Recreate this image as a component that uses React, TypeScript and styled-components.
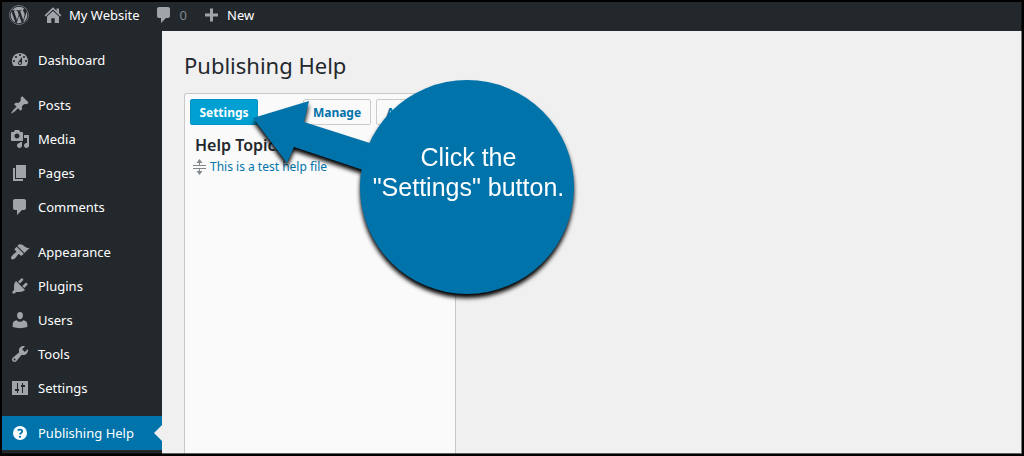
import React from "react";
import styled, { createGlobalStyle, css } from "styled-components";
import { FaWordpress } from "react-icons/fa";

const GlobalStyle = createGlobalStyle`
  *, *::before, *::after { box-sizing: border-box; }
  body {
    margin: 0;
    background: #f0f0f0;
    color: #23282d;
    font: 13px/18px "Noto Sans", "Open Sans", sans-serif;
  }
  h1, h2, ul { margin: 0; padding: 0; }
  ul { list-style: none; }
  a { color: inherit; text-decoration: none; }
  button { font: inherit; cursor: pointer; }
`;

const icons = {
  home: "M10 2.2L1.6 10.3l1.2 1.2L10 4.6l7.2 6.9 1.2-1.2L16 8V3.4h-2.4v2.3zM10 5.9L4 11.6V18h4.3v-4.8h3.4V18H16v-6.4z",
  comment: "M5 2h9c1.1 0 2 .9 2 2v7c0 1.1-.9 2-2 2h-2l-5 5v-5H5c-1.1 0-2-.9-2-2V4c0-1.1.9-2 2-2z",
  plus: "M17 8.5v3h-5v5H9v-5H4v-3h5v-5h3v5h5z",
  dashboard:
    "M3.76 16h12.48c1.1-1.37 1.76-3.11 1.76-5 0-4.42-3.58-8-8-8s-8 3.58-8 8c0 1.89.66 3.63 1.76 5zM10 4c.55 0 1 .45 1 1s-.45 1-1 1-1-.45-1-1 .45-1 1-1zM6 6c.55 0 1 .45 1 1s-.45 1-1 1-1-.45-1-1 .45-1 1-1zm8 0c.55 0 1 .45 1 1s-.45 1-1 1-1-.45-1-1 .45-1 1-1zm-5.37 5.55L12 7v6c0 1.1-.9 2-2 2s-2-.9-2-2c0-.57.24-1.08.63-1.45zM4 10c.55 0 1 .45 1 1s-.45 1-1 1-1-.45-1-1 .45-1 1-1zm12 0c.55 0 1 .45 1 1s-.45 1-1 1-1-.45-1-1 .45-1 1-1zm-5 3c0-.55-.45-1-1-1s-1 .45-1 1 .45 1 1 1 1-.45 1-1z",
  post: "M10.44 3.02l1.82-1.82 6.36 6.35-1.83 1.82c-1.05-.68-2.48-.57-3.41.36l-.75.75c-.92.93-1.04 2.35-.35 3.41l-1.83 1.82-2.41-2.41-2.8 2.79c-.42.42-3.38 2.71-3.8 2.29s1.86-3.39 2.28-3.81l2.79-2.79L4.1 9.36l1.83-1.82c1.05.69 2.48.57 3.4-.36l.75-.75c.93-.92 1.05-2.35.36-3.41z",
  media:
    "M13 11V4c0-.55-.45-1-1-1h-1.67L9 1H5L3.67 3H2c-.55 0-1 .45-1 1v7c0 .55.45 1 1 1h10c.55 0 1-.45 1-1zM7 4.5c1.38 0 2.5 1.12 2.5 2.5S8.38 9.5 7 9.5 4.5 8.38 4.5 7 5.62 4.5 7 4.5zM14 6h5v10.5c0 1.38-1.12 2.5-2.5 2.5S14 17.88 14 16.5s1.12-2.5 2.5-2.5c.17 0 .34.02.5.05V9h-3V6zm-4 8.05V13h2v3.5c0 1.38-1.12 2.5-2.5 2.5S7 17.88 7 16.5 8.12 14 9.5 14c.17 0 .34.02.5.05z",
  page: "M6 15V2h10v13H6zm-1 1h8v2H3V5h2v11z",
  appearance:
    "M14.48 11.06L7.41 3.99l1.5-1.5c.5-.56 2.3-.47 3.51.32 1.21.8 1.43 1.28 2.91 2.1 1.18.64 2.45 1.26 4.45.85zm-.71.71L6.7 4.7 4.93 6.47c-.39.39-.39 1.02 0 1.41l1.06 1.06c.39.39.39 1.03 0 1.42-.6.6-1.43 1.11-2.21 1.69-.35.26-.7.53-1.01.84C1.43 14.23.4 16.08 1.4 17.07c.99 1 2.84-.03 4.18-1.36.31-.31.58-.66.85-1.02.57-.78 1.08-1.61 1.69-2.21.39-.39 1.02-.39 1.41 0l1.06 1.06c.39.39 1.02.39 1.41 0z",
  plugins:
    "M13.11 4.36L9.87 7.6 8 5.73l3.24-3.24c.35-.34 1.05-.2 1.56.32.52.51.66 1.21.31 1.55zm-8 1.77l.91-1.12 9.01 9.01-1.19.84c-.71.71-2.63 1.16-3.82 1.16H6.14L4.9 17.26c-.59.59-1.54.59-2.12 0-.59-.58-.59-1.53 0-2.12l1.24-1.24v-3.88c0-1.13.4-3.19 1.09-3.89zm7.26 3.97l3.24-3.24c.34-.35 1.04-.21 1.55.31.52.51.66 1.21.31 1.55l-3.24 3.25z",
  users:
    "M10 9.25c-2.27 0-2.93-2.44-2.93-3.94C7.07 3.5 8 2 9.97 2c2.16 0 2.98 1.5 2.98 3.31 0 1.5-.68 3.94-2.95 3.94zM6.6 10.2q3.4 3 6.8 0c2.2.3 3.9 1.9 3.9 4v2.9q-7.3 2.2-14.6 0v-2.9c0-2.1 1.7-3.7 3.9-4z",
  tools:
    "M16.68 9.77c-1.34 1.34-3.3 1.67-4.95.99l-5.41 6.52c-.99.99-2.59.99-3.58 0s-.99-2.59 0-3.57l6.52-5.42c-.68-1.65-.35-3.61.99-4.95 1.28-1.28 3.12-1.62 4.72-1.06l-2.89 2.89 2.82 2.82 2.86-2.87c.53 1.58.18 3.39-1.08 4.65zM3.81 16.21c.4.39 1.04.39 1.43 0 .4-.4.4-1.04 0-1.43-.39-.4-1.03-.4-1.43 0-.39.39-.39 1.03 0 1.43z",
  settings:
    "M18 17V3H2v14h16zM8 11h1v2H8v2H7v-2H5v-2h2V5h1v6zm5-2h-2V7h1V5h1v2h2v2h-2v6h-1V9z",
};

type IconName = keyof typeof icons;

const IconSvg = styled.svg`
  flex: none;
  width: 20px;
  height: 20px;
  fill: currentColor;
`;

const Icon = ({ name }: { name: IconName }) => (
  <IconSvg viewBox="0 0 20 20" aria-hidden="true">
    <path fillRule="evenodd" d={icons[name]} />
  </IconSvg>
);

const HelpIcon = () => (
  <IconSvg viewBox="0 0 20 20" aria-hidden="true">
    <circle cx="10" cy="10" r="7" />
    <path
      d="M7.6 7.3c1.7-1.3 4.6-.9 4.6 1 0 1.7-2.2 1.5-2.2 3.2"
      fill="none"
      stroke="#0073aa"
      strokeWidth="1.8"
    />
    <circle cx="10" cy="13.8" r="1.1" fill="#0073aa" />
  </IconSvg>
);

const Frame = styled.div`
  position: relative;
  display: flex;
  flex-direction: column;
  height: 100vh;
  overflow: hidden;
  border: 2px solid #000;

  &::after {
    content: "";
    position: absolute;
    inset: 0;
    border-right: 1px solid rgba(0, 0, 0, 0.5);
    border-bottom: 1px solid rgba(0, 0, 0, 0.6);
    pointer-events: none;
  }
`;

const AdminBar = styled.header`
  display: flex;
  flex: none;
  align-items: center;
  gap: 14px;
  height: 29px;
  padding: 0 7px 3px;
  background: #23282d;
  color: #eee;
`;

const BarLink = styled.a<{ $dim?: boolean }>`
  display: flex;
  align-items: center;
  gap: 6px;
  color: ${(p) => (p.$dim ? "#82878c" : "#fff")};

  svg {
    color: #a0a5aa;
  }
`;

const Columns = styled.div`
  display: flex;
  flex: 1;
  min-height: 0;
`;

const SideMenu = styled.nav`
  flex: none;
  width: 160px;
  padding-top: 12px;
  background: #23282d;
`;

const MenuGroup = styled.ul`
  margin-bottom: 11px;
`;

const MenuLink = styled.a<{ $current?: boolean }>`
  position: relative;
  display: flex;
  align-items: center;
  gap: 8px;
  height: 34px;
  padding-left: 8px;
  color: #fff;

  svg {
    color: #a0a5aa;
  }

  ${(p) =>
    p.$current &&
    css`
      background: #0073aa;

      svg {
        color: #fff;
      }

      &::after {
        content: "";
        position: absolute;
        right: 0;
        top: 9px;
        border: 8px solid transparent;
        border-right-color: #f0f0f0;
        border-left: 0;
      }
    `}
`;

const Main = styled.main`
  display: flex;
  flex: 1;
  flex-direction: column;
  min-width: 0;
  padding: 19px 22px 0;
  background: #f0f0f0;
`;

const Title = styled.h1`
  margin-bottom: 13px;
  font-size: 22px;
  font-weight: 400;
  line-height: 30px;
`;

const Panel = styled.section`
  flex: 1;
  width: 272px;
  padding: 5px;
  border: 1px solid #c8c8c8;
  border-bottom: 0;
  border-radius: 3px 3px 0 0;
  background: #fafafa;
`;

const Toolbar = styled.div`
  display: flex;
  gap: 5px;
`;

const Button = styled.button<{ $primary?: boolean }>`
  flex: none;
  height: 26px;
  padding: 2px 8px 0;
  border: 1px solid #ccc;
  border-radius: 2px;
  background: #fafafa;
  color: #0073aa;
  font-weight: 700;
  font-size: 12px;
  min-width: 68px;
  white-space: nowrap;

  &:last-child {
    min-width: 74px;
  }

  ${(p) =>
    p.$primary &&
    css`
      margin-right: auto;
      border-color: #0090c4;
      background: #00a0d2;
      color: #fff;
    `}
`;

const TopicsHeading = styled.h2`
  padding: 9px 5px 0;
  font-size: 16px;
  font-weight: 600;
  line-height: 22px;
`;

const TopicLink = styled.a`
  display: flex;
  align-items: center;
  gap: 4px;
  height: 22px;
  padding-left: 3px;
  color: #0073aa;
  font-size: 12px;
`;

const Handle = styled.svg`
  width: 13px;
  height: 16px;
`;

const Callout = styled.aside`
  position: absolute;
  left: 249px;
  top: 77px;
  filter: drop-shadow(0 4px 2px rgba(0, 0, 0, 1));
`;

const Arrow = styled.svg`
  display: block;
  width: 324px;
  height: 216px;
`;

const CalloutText = styled.p`
  position: absolute;
  right: 0;
  top: 0;
  width: 215px;
  margin: 0;
  padding: 63px 0 0 2px;
  color: #fff;
  font: 25px/30px "Liberation Sans", Arial, sans-serif;
  text-align: center;
  white-space: nowrap;
`;

const menu: { icon: IconName; label: string }[][] = [
  [{ icon: "dashboard", label: "Dashboard" }],
  [
    { icon: "post", label: "Posts" },
    { icon: "media", label: "Media" },
    { icon: "page", label: "Pages" },
    { icon: "comment", label: "Comments" },
  ],
  [
    { icon: "appearance", label: "Appearance" },
    { icon: "plugins", label: "Plugins" },
    { icon: "users", label: "Users" },
    { icon: "tools", label: "Tools" },
    { icon: "settings", label: "Settings" },
  ],
];

export default function App() {
  return (
    <Frame>
      <GlobalStyle />
      <AdminBar>
        <BarLink href="#" aria-label="About WordPress">
          <FaWordpress size={20} />
        </BarLink>
        <BarLink href="#">
          <Icon name="home" />
          My Website
        </BarLink>
        <BarLink href="#" $dim>
          <Icon name="comment" />
          0
        </BarLink>
        <BarLink href="#">
          <Icon name="plus" />
          New
        </BarLink>
      </AdminBar>
      <Columns>
        <SideMenu aria-label="Main menu">
          {menu.map((group) => (
            <MenuGroup key={group[0].label}>
              {group.map((item) => (
                <li key={item.label}>
                  <MenuLink href="#">
                    <Icon name={item.icon} />
                    {item.label}
                  </MenuLink>
                </li>
              ))}
            </MenuGroup>
          ))}
          <MenuGroup>
            <li>
              <MenuLink href="#" $current aria-current="page">
                <HelpIcon />
                Publishing Help
              </MenuLink>
            </li>
          </MenuGroup>
        </SideMenu>
        <Main>
          <Title>Publishing Help</Title>
          <Panel>
            <Toolbar>
              <Button type="button" $primary>
                Settings
              </Button>
              <Button type="button">Manage</Button>
              <Button type="button">Add New</Button>
            </Toolbar>
            <TopicsHeading>Help Topics</TopicsHeading>
            <TopicLink href="#">
              <Handle viewBox="0 0 13 16" aria-hidden="true">
                <path d="M0 6.5h13M0 9.5h13M6.5 2v4M6.5 10v4" stroke="#82878c" />
                <path d="M6.5 0L9.5 4h-6zM6.5 16L9.5 12h-6z" fill="#82878c" />
              </Handle>
              This is a test help file
            </TopicLink>
          </Panel>
        </Main>
      </Columns>
      <Callout>
        <Arrow viewBox="0 0 324 216" aria-hidden="true">
          <path d="M2 39L58 22L53 43L125 66L118 93L43 68L36 84Z" fill="#0073aa" />
          <circle cx="216" cy="108" r="107" fill="#0073aa" />
        </Arrow>
        <CalloutText>
          Click the
          <br />
          "Settings" button.
        </CalloutText>
      </Callout>
    </Frame>
  );
}
